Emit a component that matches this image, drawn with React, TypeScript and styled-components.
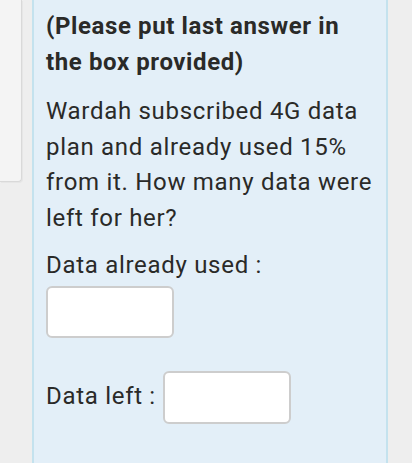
import * as React from 'react';
import styled, { createGlobalStyle } from 'styled-components';

const Global = createGlobalStyle`
  html, body {
    margin: 0;
    padding: 0;
    background: #eeeeee;
    overflow: hidden;
  }
  body {
    font-family: Roboto, 'Noto Sans', sans-serif;
  }
`;

const Page = styled.div`
  display: flex;
  align-items: flex-start;
  height: 463px;
`;

const SidePanel = styled.div`
  width: 21px;
  height: 181px;
  flex-shrink: 0;
  background: #f4f4f4;
  border-right: 1px solid #d9d9d9;
  border-bottom: 1px solid #d9d9d9;
  border-bottom-right-radius: 4px;
  box-shadow: 1px 1px 0 #e6e6e6;
`;

const QuestionCard = styled.div`
  margin-left: 10px;
  width: 356px;
  flex-shrink: 0;
  height: 463px;
  box-sizing: border-box;
  padding: 9px 8px 0 12px;
  background: #e3eff8;
  border-left: 2px solid #c4e2ee;
  border-right: 2px solid #c4e2ee;
  color: #2a2a28;
  font-size: 24px;
  letter-spacing: 0.7px;
  line-height: 35.5px;
`;

const Paragraph = styled.p<{ $bold?: boolean }>`
  margin: 0 0 ${p => (p.$bold ? '14px' : '11px')} 0;
  font-weight: ${p => (p.$bold ? 700 : 400)};
  letter-spacing: ${p => (p.$bold ? '0.6px' : 'inherit')};
`;

const Label = styled.div`
  margin-top: 12px;
`;

const AnswerBox = styled.input`
  display: block;
  box-sizing: border-box;
  width: 128px;
  height: 52px;
  margin: 2px 0 0 0;
  padding: 0 8px;
  background: #ffffff;
  border: 2px solid #cdcdcd;
  border-radius: 6px;
  font: inherit;
  outline: none;
`;

const InlineRow = styled.div`
  display: flex;
  align-items: center;
  gap: 7px;
  margin-top: 33px;

  ${AnswerBox} {
    margin: 0;
    height: 53px;
  }
`;

export default function App() {
  return (
    <>
      <Global />
      <Page>
        <SidePanel />
        <QuestionCard>
          <Paragraph $bold>(Please put last answer in the box provided)</Paragraph>
          <Paragraph>
            Wardah subscribed 4G data plan and already used 15% from it. How many data were left for her?
          </Paragraph>
          <Label>Data already used :</Label>
          <AnswerBox type="text" />
          <InlineRow>
            <span>Data left :</span>
            <AnswerBox type="text" />
          </InlineRow>
        </QuestionCard>
      </Page>
    </>
  );
}
